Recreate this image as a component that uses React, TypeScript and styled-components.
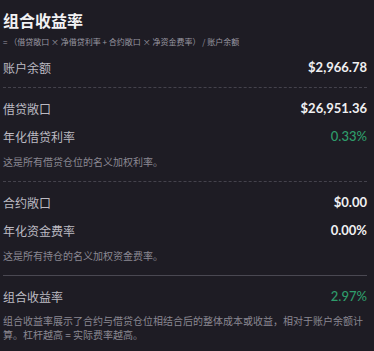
import React from "react";
import styled, { createGlobalStyle } from "styled-components";

const Global = createGlobalStyle`
  html, body { margin: 0; padding: 0; background: #1e1c24; }
  body { font-family: "Noto Sans CJK SC", "Noto Sans", sans-serif; }
`;

const Panel = styled.div`
  box-sizing: border-box;
  width: 374px;
  min-height: 351px;
  padding: 8px 7px 0 3px;
  background: #1e1c24;
  display: flex;
  flex-direction: column;
`;

const Title = styled.h1`
  margin: 0;
  font-size: 16px;
  line-height: 24px;
  font-weight: 700;
  color: #f2f2f4;
`;

const Formula = styled.div`
  margin-top: 4px;
  font-size: 8px;
  line-height: 12px;
  color: #9a98a2;
  white-space: nowrap;
`;

const Section = styled.div<{ $top?: number }>`
  display: flex;
  flex-direction: column;
  padding-top: ${(p) => p.$top ?? 6}px;
`;

const Row = styled.div`
  height: 28px;
  display: flex;
  align-items: center;
  justify-content: space-between;
`;

const Label = styled.span`
  font-size: 12px;
  color: #bcbac2;
`;

const Value = styled.span<{ $green?: boolean }>`
  font-family: Lato, "Noto Sans", sans-serif;
  font-size: 13px;
  font-weight: ${(p) => (p.$green ? 500 : 700)};
  color: ${(p) => (p.$green ? "#2e9c6b" : "#f0f0f2")};
`;

const Note = styled.p<{ $top?: number }>`
  margin: ${(p) => p.$top ?? 5}px 0 0;
  font-size: 10px;
  line-height: 14px;
  color: #8a8892;
`;

const Divider = styled.hr<{ $solid?: boolean; $top?: number }>`
  margin: ${(p) => p.$top ?? 12}px 0 0;
  border: none;
  border-top: 1px ${(p) => (p.$solid ? "solid #4a4852" : "dashed #44424c")};
  height: 0;
  width: 100%;
`;

export default function App() {
  return (
    <>
      <Global />
      <Panel>
        <Title>组合收益率</Title>
        <Formula>= （借贷敞口 × 净借贷利率 + 合约敞口 × 净资金费率） / 账户余额</Formula>
        <Section $top={5}>
          <Row>
            <Label>账户余额</Label>
            <Value>$2,966.78</Value>
          </Row>
        </Section>
        <Divider $top={6} />
        <Section>
          <Row>
            <Label>借贷敞口</Label>
            <Value>$26,951.36</Value>
          </Row>
          <Row>
            <Label>年化借贷利率</Label>
            <Value $green>0.33%</Value>
          </Row>
          <Note>这是所有借贷仓位的名义加权利率。</Note>
        </Section>
        <Divider />
        <Section>
          <Row>
            <Label>合约敞口</Label>
            <Value>$0.00</Value>
          </Row>
          <Row>
            <Label>年化资金费率</Label>
            <Value>0.00%</Value>
          </Row>
          <Note>这是所有持仓的名义加权资金费率。</Note>
        </Section>
        <Divider $solid />
        <Section>
          <Row>
            <Label>组合收益率</Label>
            <Value $green>2.97%</Value>
          </Row>
          <Note $top={4}>
            组合收益率展示了合约与借贷仓位相结合后的整体成本或收益，相对于账户余额计算。杠杆越高 = 实际费率越高。
          </Note>
        </Section>
      </Panel>
    </>
  );
}
